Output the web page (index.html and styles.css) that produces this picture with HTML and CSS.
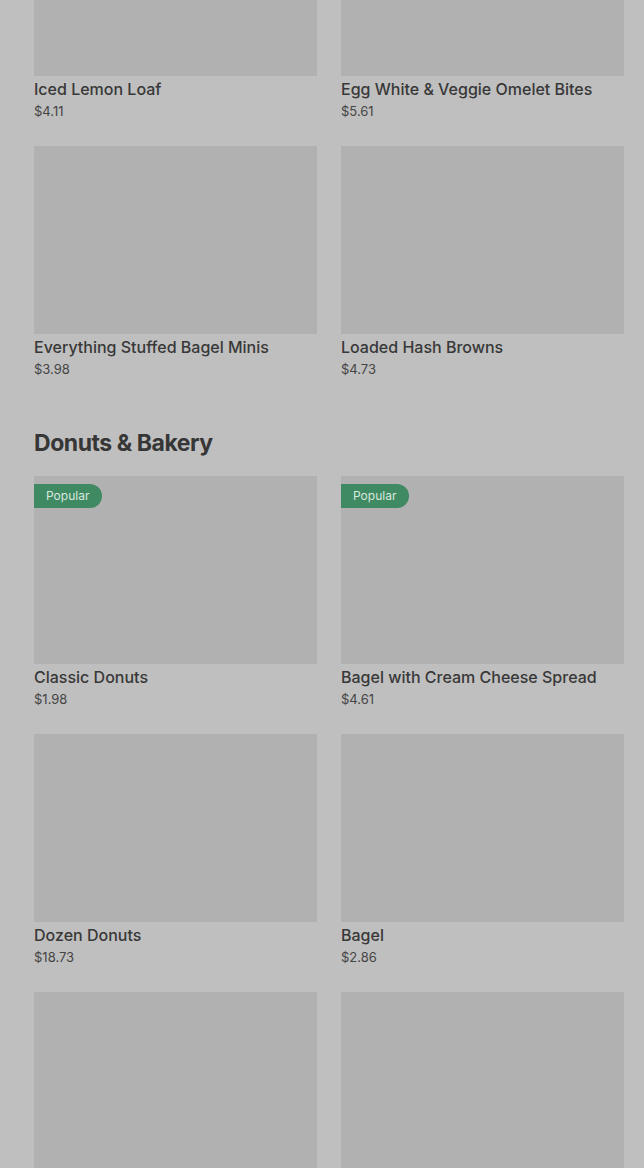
FILE: index.html
```html
<!DOCTYPE html>
<html>
<head>
<meta charset="utf-8">
<link rel="stylesheet" href="styles.css">
</head>
<body>
<div class="page">
  <section class="section first">
    <div class="grid">
      <div class="card"><div class="img"></div><div class="info"><div class="name">Iced Lemon Loaf</div><div class="price">$4.11</div></div></div>
      <div class="card"><div class="img"></div><div class="info"><div class="name">Egg White &amp; Veggie Omelet Bites</div><div class="price">$5.61</div></div></div>
      <div class="card"><div class="img"></div><div class="info"><div class="name">Everything Stuffed Bagel Minis</div><div class="price">$3.98</div></div></div>
      <div class="card"><div class="img"></div><div class="info"><div class="name">Loaded Hash Browns</div><div class="price">$4.73</div></div></div>
    </div>
  </section>
  <section class="section">
    <h2 class="heading">Donuts &amp; Bakery</h2>
    <div class="grid">
      <div class="card"><div class="img"><span class="badge">Popular</span></div><div class="info"><div class="name">Classic Donuts</div><div class="price">$1.98</div></div></div>
      <div class="card"><div class="img"><span class="badge">Popular</span></div><div class="info"><div class="name">Bagel with Cream Cheese Spread</div><div class="price">$4.61</div></div></div>
      <div class="card"><div class="img"></div><div class="info"><div class="name">Dozen Donuts</div><div class="price">$18.73</div></div></div>
      <div class="card"><div class="img"></div><div class="info"><div class="name">Bagel</div><div class="price">$2.86</div></div></div>
      <div class="card"><div class="img"></div></div>
      <div class="card"><div class="img"></div></div>
    </div>
  </section>
</div>
</body>
</html>
```

FILE: styles.css
```css
html, body {
  margin: 0;
  padding: 0;
  background: #bfbfbf;
  overflow: hidden;
}
body {
  font-family: Inter, "Noto Sans", sans-serif;
  color: #383838;
}
.page {
  padding: 0 20px 0 34px;
  margin-top: -112px;
}
.grid {
  display: grid;
  grid-template-columns: 283px 283px;
  column-gap: 24px;
  row-gap: 25px;
}
.card {
  display: flex;
  flex-direction: column;
}
.img {
  position: relative;
  height: 188px;
  background: #b1b1b1;
}
.info {
  padding-top: 1px;
}
.name {
  font-size: 16px;
  line-height: 24px;
  font-weight: 500;
  color: #383838;
}
.price {
  font-size: 13px;
  line-height: 20px;
  color: #454545;
}
.heading {
  margin: 48px 0 17px;
  font-size: 23px;
  line-height: 32px;
  font-weight: 700;
  letter-spacing: -0.45px;
  color: #363636;
}
.badge {
  position: absolute;
  left: 0;
  top: 8px;
  height: 24px;
  line-height: 24px;
  padding: 0 13px 0 12px;
  background: #3f8a63;
  color: #d9e8df;
  font-size: 12px;
  border-radius: 0 12px 12px 0;
}
```
